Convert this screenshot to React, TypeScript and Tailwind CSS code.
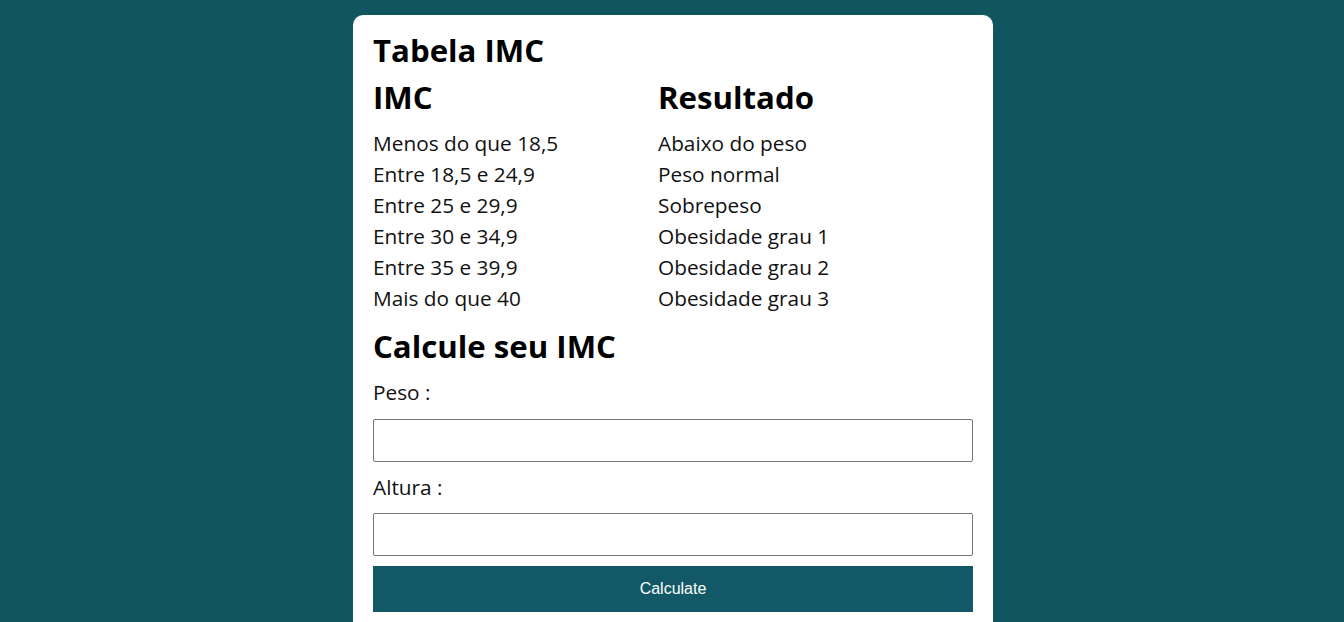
const rows = [
  ['Menos do que 18,5', 'Abaixo do peso'],
  ['Entre 18,5 e 24,9', 'Peso normal'],
  ['Entre 25 e 29,9', 'Sobrepeso'],
  ['Entre 30 e 34,9', 'Obesidade grau 1'],
  ['Entre 35 e 39,9', 'Obesidade grau 2'],
  ['Mais do que 40', 'Obesidade grau 3'],
];

const App = () => {
  return (
    <div className="min-h-screen bg-[#11565f] pt-[15px] pl-[2px] font-['Open_Sans',sans-serif]">
      <div className="mx-auto w-[640px] rounded-t-[10px] bg-white px-5 pt-[15px] pb-10 text-black">
        <h1 className="text-[31.2px] leading-[40px] font-bold">Tabela IMC</h1>
        <div className="mt-[7px] flex">
          <div className="w-[285px]">
            <h2 className="text-[31.2px] leading-[40px] font-bold">IMC</h2>
            <ul className="mt-[11px] text-[20.8px] leading-[31px] text-[#111]">
              {rows.map(([imc]) => (
                <li key={imc}>{imc}</li>
              ))}
            </ul>
          </div>
          <div className="flex-1">
            <h2 className="text-[31.2px] leading-[40px] font-bold">Resultado</h2>
            <ul className="mt-[11px] text-[20.8px] leading-[31px] text-[#111]">
              {rows.map(([imc, res]) => (
                <li key={imc}>{res}</li>
              ))}
            </ul>
          </div>
        </div>
        <h2 className="mt-[12px] text-[31.2px] leading-[40px] font-bold">Calcule seu IMC</h2>
        <form className="flex flex-col">
          <label className="mt-[11px] text-[20.8px] leading-[31px] text-[#111]">Peso :</label>
          <input type="text" className="mt-[11px] h-[43px] border border-[#767676] rounded-[2px]" />
          <label className="mt-[10px] text-[20.8px] leading-[31px] text-[#111]">Altura :</label>
          <input type="text" className="mt-[10px] h-[43px] border border-[#767676] rounded-[2px]" />
          <button
            type="button"
            className="mt-[10px] h-[46px] bg-[#135866] font-['Liberation_Sans',Arial,sans-serif] text-[16px] text-white"
          >
            Calculate
          </button>
        </form>
      </div>
    </div>
  );
};

export default App;
